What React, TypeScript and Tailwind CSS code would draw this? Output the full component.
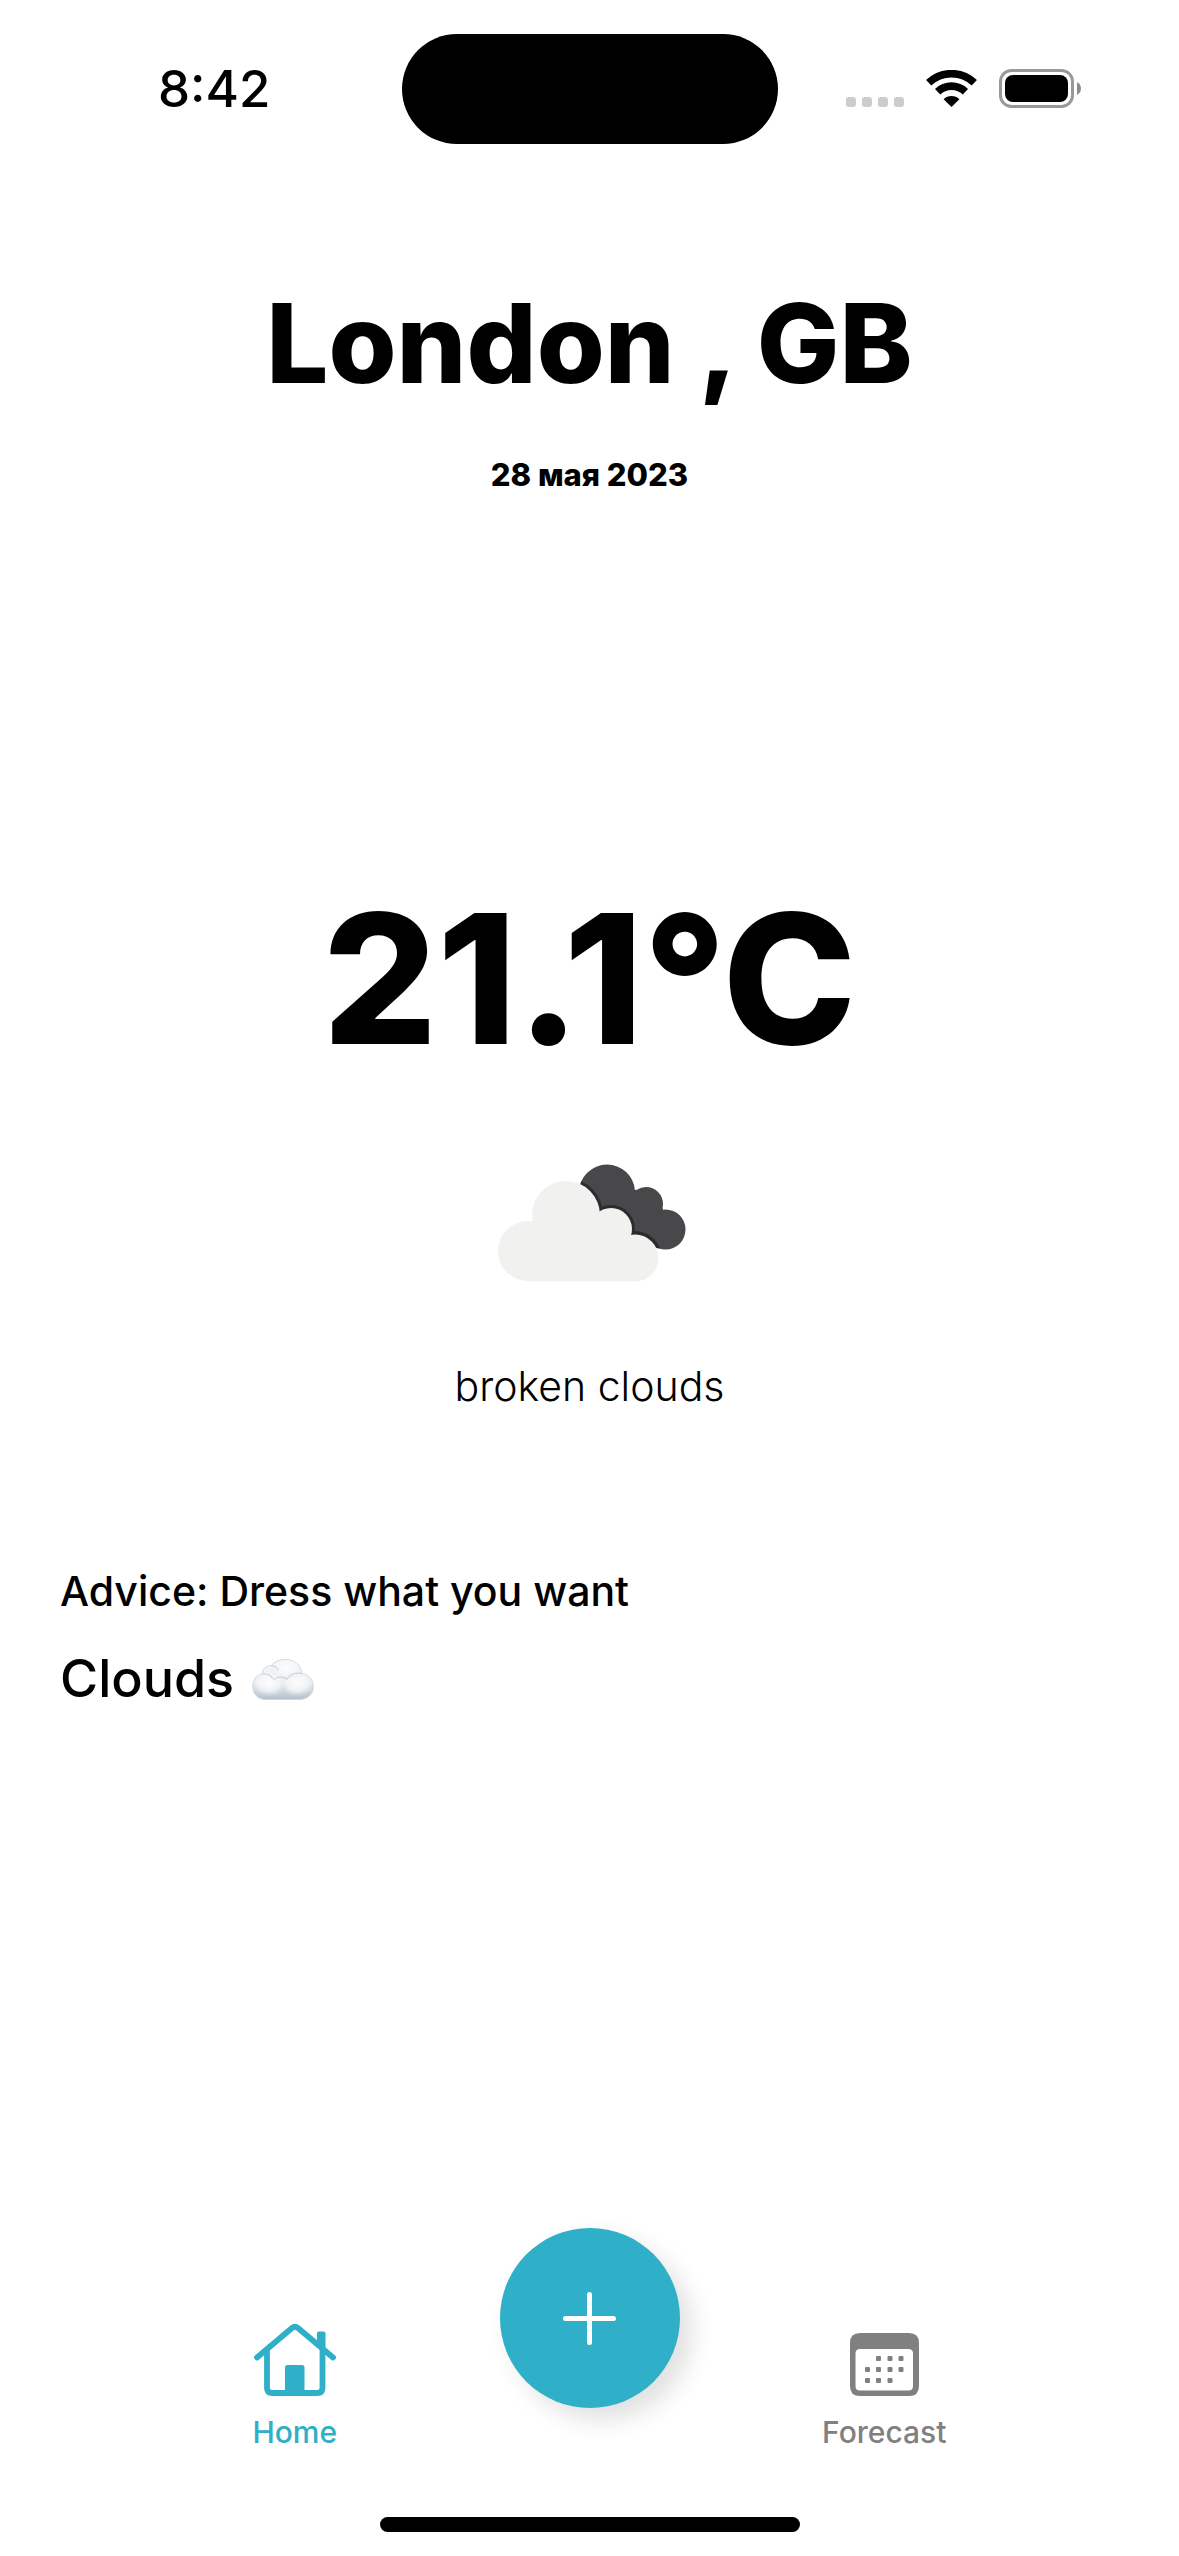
import React from "react";

function WifiIcon() {
  return (
    <svg viewBox="0 0 51 37" className="h-[37px] w-[51px]" fill="none" stroke="#000" aria-hidden="true">
      <path d="M2.7 12.8 A33 33 0 0 1 48.3 12.8" strokeWidth="7.6" />
      <path d="M11.6 21.7 A20.2 20.2 0 0 1 39.4 21.7" strokeWidth="7.6" />
      <path d="M25.5 37 L17.6 29.2 A11.4 11.4 0 0 1 33.4 29.2 Z" fill="#000" stroke="none" />
    </svg>
  );
}

function BatteryIcon() {
  return (
    <svg viewBox="0 0 83 39" className="h-[39px] w-[83px]" aria-hidden="true">
      <rect x="1.5" y="1.5" width="72" height="36" rx="11" fill="none" stroke="#999" strokeWidth="3" />
      <rect x="6" y="6" width="63" height="27" rx="8" fill="#000" />
      <path d="M78 13.2 a7 7 0 0 1 0 12.6 z" fill="#8c8c8c" />
    </svg>
  );
}

function StatusBar() {
  return (
    <header className="grid h-[180px] grid-cols-[1fr_376px_1fr] items-start pt-[34px]">
      <div className="flex h-[108px] items-center justify-center pl-[27px]">
        <time className="text-[51px] leading-none font-medium">8:42</time>
      </div>
      <div className="h-[110px] rounded-[55px] bg-black" />
      <div className="flex h-[108px] items-center justify-end gap-[22px] pr-[97px]">
        <div className="flex gap-[6px] pt-[27px]">
          {[0, 1, 2, 3].map((dot) => (
            <span key={dot} className="size-[10px] rounded-[3px] bg-[#cccccc]" />
          ))}
        </div>
        <WifiIcon />
        <BatteryIcon />
      </div>
    </header>
  );
}

function BrokenCloudsIcon() {
  return (
    <svg viewBox="0 0 188 118" className="h-[118px] w-[188px]" role="img" aria-label="broken clouds">
      <defs>
        <clipPath id="dark-cloud">
          <circle cx="109" cy="28.500" r="28" />
          <circle cx="148" cy="40" r="17" />
          <circle cx="167.500" cy="65.500" r="20" />
          <path d="M109 28 L137 26 L148 24 L164 38 L165 46 L180 60 L167 85 L158 84 L100 66 Z" />
        </clipPath>
      </defs>
      <g clipPath="url(#dark-cloud)">
        <rect width="188" height="118" fill="#48484a" />
        <g fill="#2c2c2e">
          <circle cx="68" cy="51" r="37" />
          <circle cx="113" cy="65" r="24" />
          <circle cx="137" cy="94" r="27" />
        </g>
      </g>
      <g fill="#f1f1f0">
        <circle cx="30" cy="87" r="30" />
        <circle cx="68" cy="51" r="34" />
        <circle cx="113" cy="65" r="21" />
        <circle cx="137" cy="94" r="23.500" />
        <path d="M30 117 V60 H68 L113 60 L137 75 V117.500 H30 Z" />
      </g>
    </svg>
  );
}

function CloudEmoji() {
  return (
    <svg viewBox="0 0 62 41" className="h-[41px] w-[62px]" role="img" aria-label="cloud">
      <defs>
        <linearGradient id="puff" x1="0" y1="0" x2="0" y2="1">
          <stop offset="0" stopColor="#f7f8f9" />
          <stop offset="0.550" stopColor="#eceff2" />
          <stop offset="1" stopColor="#b3c0cd" />
        </linearGradient>
        <radialGradient id="glow" cx="0.5" cy="0.4" r="0.6">
          <stop offset="0" stopColor="#fdfdfd" />
          <stop offset="0.600" stopColor="#f5f6f8" stopOpacity="0.800" />
          <stop offset="1" stopColor="#dfe5eb" stopOpacity="0" />
        </radialGradient>
      </defs>
      <path
        d="M13 40.500 C5 40 0.700 34 0.700 27.500 C0.700 20.500 5 15.500 10.500 15 C10.500 9.500 14 6.500 19.500 6.700 C22 2.500 28 0.400 34 0.500 C43 0.700 49.500 6.500 50 14.500 C57 16 61.300 21 61.300 27.500 C61.300 35 56 40 48 40.500 Z"
        fill="url(#puff)"
        stroke="#c9d5df"
        strokeWidth="0.900"
      />
      <ellipse cx="17" cy="26" rx="15" ry="12" fill="url(#glow)" />
      <ellipse cx="45" cy="26" rx="15" ry="12" fill="url(#glow)" />
      <ellipse cx="34" cy="11" rx="15" ry="10" fill="url(#glow)" />
      <g fill="none" stroke="#ccd6df" strokeWidth="1.200" strokeLinecap="round">
        <path d="M10.500 15 C15 14.500 19 16 20.500 19.500" />
        <path d="M19.500 6.700 C23 7.200 25 8.500 26 11" />
        <path d="M22 20.500 C26 17.500 32 17.500 35 20" />
        <path d="M35 20 C38 15.500 44 13.500 50 14.500" />
      </g>
    </svg>
  );
}

function HomeIcon() {
  return (
    <svg viewBox="0 0 82 72" className="h-[72px] w-[82px]" fill="none" stroke="currentColor" strokeLinecap="round" strokeLinejoin="round" aria-hidden="true">
      <path d="M3 33.500 L38 4 Q41 1.500 44 4 L79 33.500" strokeWidth="5.800" />
      <path d="M13 26 V64 Q13 69 18 69 H63.500 Q68.500 69 68.500 64 V26" strokeWidth="5.800" strokeLinecap="butt" />
      <path d="M63 9.500 Q63 7.500 65 7.500 H69.500 Q71.500 7.500 71.500 9.500 V30 L63 22 Z" fill="currentColor" stroke="none" />
      <path d="M31 69 V43.500 Q31 41 33.500 41 H48 Q50.500 41 50.500 43.500 V69 Z" fill="currentColor" stroke="none" />
    </svg>
  );
}

const calendarDots: [number, number][] = [
  [26, 23], [37.5, 23], [48.5, 23],
  [15, 34], [26, 34], [37.5, 34], [48.5, 34],
  [15, 45], [26, 45], [37.5, 45],
];

function CalendarIcon() {
  return (
    <svg viewBox="0 0 69 63" className="h-[63px] w-[69px]" fill="currentColor" aria-hidden="true">
      <path
        fillRule="evenodd"
        d="M10 0 H59 Q69 0 69 10 V53 Q69 63 59 63 H10 Q0 63 0 53 V10 Q0 0 10 0 Z M10 16 Q5.500 16 5.500 20.500 V53 Q5.500 57.500 10 57.500 H58.500 Q63 57.500 63 53 V20.500 Q63 16 58.500 16 Z"
      />
      {calendarDots.map(([x, y]) => (
        <rect key={`${x}-${y}`} x={x} y={y} width="5" height="5" rx="1" />
      ))}
    </svg>
  );
}

function TabBar() {
  return (
    <nav className="relative grid grid-cols-2 pb-[67px]">
      <a href="#home" className="flex flex-col items-center gap-[18px] text-[#30afc8]">
        <span className="flex h-[72px] items-end">
          <HomeIcon />
        </span>
        <span className="text-[30px] leading-[36px] font-medium">Home</span>
      </a>
      <a href="#forecast" className="flex flex-col items-center gap-[18px] text-[#808080]">
        <span className="flex h-[72px] items-end">
          <CalendarIcon />
        </span>
        <span className="text-[30px] leading-[36px] font-medium">Forecast</span>
      </a>
      <button
        type="button"
        aria-label="Add"
        className="absolute -top-24 left-1/2 flex size-[180px] -translate-x-1/2 items-center justify-center rounded-full bg-[#30afc8] shadow-[12px_12px_24px_rgba(0,0,0,0.12)]"
      >
        <svg viewBox="0 0 53 53" className="size-[53px]" stroke="#fff" strokeWidth="5" strokeLinecap="round" aria-hidden="true">
          <path d="M26.500 2.500 V50.500 M2.500 26.500 H50.500" />
        </svg>
      </button>
    </nav>
  );
}

export default function App() {
  return (
    <div className="flex min-h-screen flex-col bg-white font-['Inter',sans-serif] text-black">
      <StatusBar />
      <main className="flex flex-1 flex-col">
        <section className="flex flex-col items-center pt-[95px] text-center">
          <h1 className="text-[110px] leading-[136px] font-extrabold">London , GB</h1>
          <p className="mt-[46px] text-[31px] leading-[36px] font-extrabold">28 мая 2023</p>
        </section>
        <section className="flex flex-col items-center pt-[380px] text-center">
          <p className="text-[180px] leading-[212px] font-extrabold">21.1°C</p>
          <div className="mt-[79px] pl-[4px]">
            <BrokenCloudsIcon />
          </div>
          <p className="mt-[78px] text-[41px] leading-[52px] font-light">broken clouds</p>
        </section>
        <section className="px-[60px] pt-[153px]">
          <p className="text-[41px] leading-[52px] font-medium">Advice: Dress what you want</p>
          <p className="mt-[29px] flex items-center gap-[18px] text-[52px] leading-[66px] font-medium">
            Clouds <CloudEmoji />
          </p>
        </section>
      </main>
      <TabBar />
      <div className="mx-auto mb-[24px] h-[15px] w-[420px] rounded-full bg-black" />
    </div>
  );
}
